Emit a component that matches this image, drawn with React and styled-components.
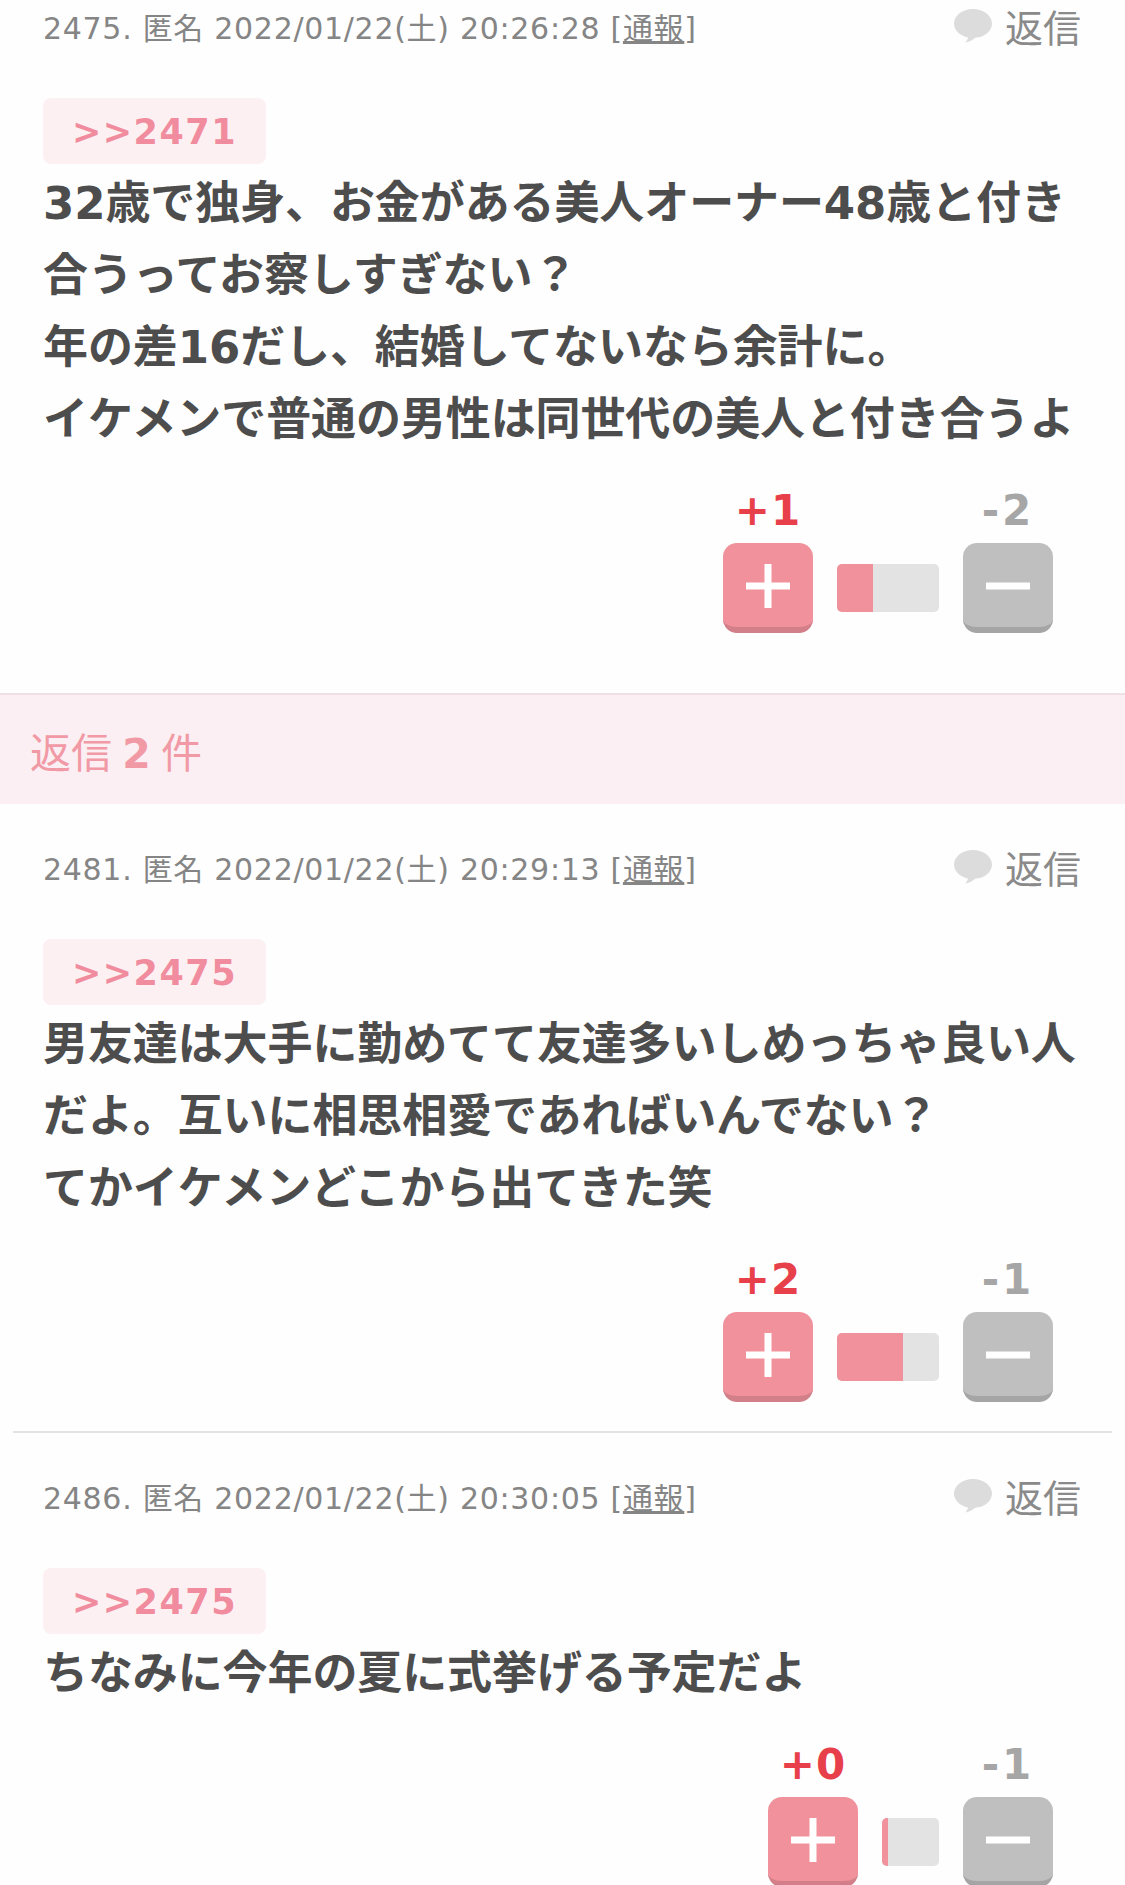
import React from 'react'
import styled, { createGlobalStyle } from 'styled-components'

const GlobalStyle = createGlobalStyle`
  html, body {
    margin: 0;
    padding: 0;
    background: #fff;
  }
  body {
    font-family: "DejaVu Sans", "Noto Sans CJK JP", sans-serif;
    overflow: hidden;
  }
`

const Page = styled.div`
  width: 1125px;
  height: 1885px;
  overflow: hidden;
  background: #fefefe;
`

const Comment = styled.section`
  padding: ${p => p.$top}px 43px 0 43px;
`

const MetaRow = styled.div`
  display: flex;
  align-items: center;
  justify-content: space-between;
  box-sizing: border-box;
  height: 52px;
  padding: 0 1px 5px 0;
`

const Meta = styled.div`
  font-family: "DejaVu Sans", "Noto Sans CJK JP", sans-serif;
  font-size: 30px;
  letter-spacing: 0.7px;
  color: #858585;
  white-space: nowrap;
`

const Report = styled.span`
  text-decoration: underline;
`

const ReplyLink = styled.div`
  display: flex;
  align-items: center;
  gap: 12px;
  font-family: "Noto Sans CJK JP", sans-serif;
  font-size: 38px;
  line-height: 1;
  color: #8a8a8a;
`

const Anchor = styled.div`
  display: flex;
  align-items: center;
  justify-content: center;
  box-sizing: border-box;
  width: 223px;
  height: 66px;
  margin-top: 44px;
  padding-top: 2px;
  border-radius: 8px;
  background: #fdf0f3;
  color: #f08c9d;
  font-size: 35px;
  font-weight: 700;
  letter-spacing: 1.5px;
`

const Body = styled.div`
  font-family: "Noto Sans CJK JP", sans-serif;
  font-size: 45px;
  font-weight: 700;
  letter-spacing: -0.1px;
  color: #4d4d4d;
  white-space: nowrap;
`

const BodyLine = styled.div`
  height: 72px;
  line-height: 72px;
`

const Digits = styled.span`
  font-family: "DejaVu Sans", sans-serif;
  line-height: 1;
`

const Votes = styled.div`
  display: flex;
  align-items: flex-end;
  justify-content: flex-end;
  margin-top: 39px;
  padding-right: 29px;
`

const VoteCol = styled.div`
  display: flex;
  flex-direction: column;
  align-items: center;
  width: 90px;
`

const Count = styled.div`
  height: 52px;
  line-height: 40px;
  font-size: 42px;
  font-weight: 700;
  letter-spacing: ${p => (p.$plus ? '1px' : '3px')};
  color: ${p => (p.$plus ? '#e8404a' : '#a6a6a6')};
`

const VoteButton = styled.div`
  display: flex;
  align-items: center;
  justify-content: center;
  box-sizing: border-box;
  width: 90px;
  height: 90px;
  padding-top: 2px;
  border-radius: 14px;
  background: ${p => (p.$plus ? '#f0919b' : '#bfbfbf')};
  border-bottom: 6px solid ${p => (p.$plus ? '#d27f89' : '#a5a5a5')};
`

const Bar = styled.div`
  display: flex;
  width: ${p => p.$width}px;
  height: 48px;
  margin: 0 24px 21px 24px;
  border-radius: 5px;
  overflow: hidden;
  background: #e3e3e3;
`

const BarFill = styled.div`
  height: 100%;
  background: #f0919b;
`

const RepliesBand = styled.div`
  display: flex;
  align-items: center;
  box-sizing: border-box;
  height: 111px;
  margin-top: 60px;
  padding-left: 30px;
  background: #fbeff3;
  border-top: 2px solid #f0dfe3;
  font-family: "Noto Sans CJK JP", sans-serif;
  font-size: 41px;
  color: #f19aa6;
  word-spacing: 1px;
`

const BandCount = styled.b`
  font-family: "DejaVu Sans", sans-serif;
  line-height: 1;
`

const Divider = styled.hr`
  height: 2px;
  margin: 29px 13px 0 13px;
  border: 0;
  background: #e4e4e4;
`

const ChatIcon = () => (
  <svg width="40" height="36" viewBox="0 0 40 36">
    <path
      d="M20 1C9.5 1 1 7.6 1 15.6c0 6.8 6 12.4 14 14-.3 1.7-1.2 3.4-2.6 5 4-.8 7.4-2.5 9.8-4.8C31.600 29.400 39 23.200 39 15.600 39 7.600 30.500 1 20 1z"
      fill="#dcdcdc"
    />
  </svg>
)

const PlusIcon = () => (
  <svg width="44" height="44" viewBox="0 0 44 44">
    <path d="M18.500 0h7v18.500H44v7H25.500V44h-7V25.500H0v-7h18.500z" fill="#fff" />
  </svg>
)

const MinusIcon = () => (
  <svg width="44" height="44" viewBox="0 0 44 44">
    <rect x="0" y="18.500" width="44" height="7" fill="#fff" />
  </svg>
)

const CommentBlock = ({ no, time, anchor, lines, plus, minus, barWidth, fill, top }) => (
  <Comment $top={top}>
    <MetaRow>
      <Meta>
        {no}. 匿名 2022/01/22(土) {time} [<Report>通報</Report>]
      </Meta>
      <ReplyLink>
        <ChatIcon />
        返信
      </ReplyLink>
    </MetaRow>
    <Anchor>&gt;&gt;{anchor}</Anchor>
    <Body>
      {lines.map((line, i) => (
        <BodyLine key={i}>{line}</BodyLine>
      ))}
    </Body>
    <Votes>
      <VoteCol>
        <Count $plus>+{plus}</Count>
        <VoteButton $plus>
          <PlusIcon />
        </VoteButton>
      </VoteCol>
      <Bar $width={barWidth}>
        <BarFill style={{ width: fill }} />
      </Bar>
      <VoteCol>
        <Count>-{minus}</Count>
        <VoteButton>
          <MinusIcon />
        </VoteButton>
      </VoteCol>
    </Votes>
  </Comment>
)

export default function App() {
  return (
    <Page>
      <GlobalStyle />
      <CommentBlock
        top={2}
        no="2475"
        time="20:26:28"
        anchor="2471"
        plus={1}
        minus={2}
        barWidth={102}
        fill={36}
        lines={[
          <><Digits>32</Digits>歳で独身、お金がある美人オーナー<Digits>48</Digits>歳と付き</>,
          '合うってお察しすぎない？',
          <>年の差<Digits>16</Digits>だし、結婚してないなら余計に。</>,
          'イケメンで普通の男性は同世代の美人と付き合うよ',
        ]}
      />
      <RepliesBand>
        <span>返信 <BandCount>2</BandCount> 件</span>
      </RepliesBand>
      <CommentBlock
        top={39}
        no="2481"
        time="20:29:13"
        anchor="2475"
        plus={2}
        minus={1}
        barWidth={102}
        fill={66}
        lines={[
          '男友達は大手に勤めてて友達多いしめっちゃ良い人',
          'だよ。互いに相思相愛であればいんでない？',
          'てかイケメンどこから出てきた笑',
        ]}
      />
      <Divider />
      <CommentBlock
        top={39}
        no="2486"
        time="20:30:05"
        anchor="2475"
        plus={0}
        minus={1}
        barWidth={57}
        fill={6}
        lines={['ちなみに今年の夏に式挙げる予定だよ']}
      />
    </Page>
  )
}
